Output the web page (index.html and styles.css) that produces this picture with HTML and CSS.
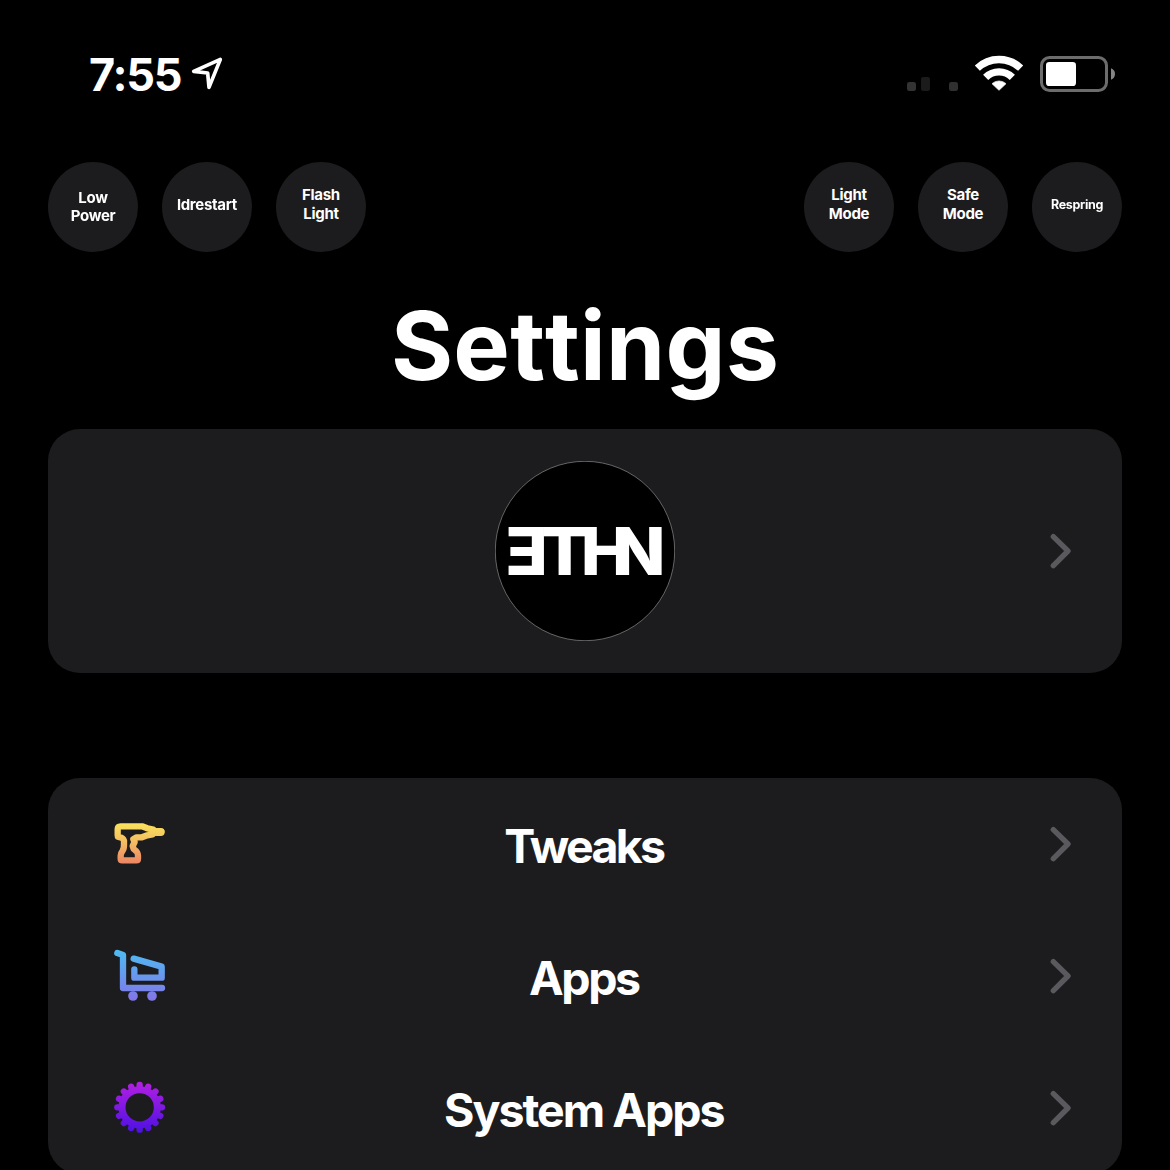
FILE: index.html
```html
<!DOCTYPE html>
<html lang="en">
<head>
<meta charset="utf-8">
<title>Settings</title>
<link rel="stylesheet" href="styles.css">
</head>
<body>
<header class="status">
  <div class="status-left">
    <span class="clock">7:55</span>
    <svg class="location" viewBox="330 33 102 105" width="34" height="35"><path d="M421 43L341 79L383 84L387 127Z" fill="none" stroke="#fff" stroke-width="11" stroke-linejoin="round"/></svg>
  </div>
  <svg class="indicators" viewBox="0 0 720 180" width="240" height="60">
    <rect x="51" y="111" width="27" height="27" rx="7" fill="#333"/>
    <rect x="93" y="96" width="27" height="42" rx="7" fill="#1b1b1b"/>
    <rect x="177" y="111" width="27" height="27" rx="7" fill="#303030"/>
    <g fill="none" stroke="#fff" stroke-width="22">
      <path d="M262 69.500A94 94 0 0 1 392 69.500"/>
      <path d="M287 97A57 57 0 0 1 367 97"/>
    </g>
    <path d="M327 136L306 116A31 31 0 0 1 348 116Z" fill="#fff" stroke="#fff" stroke-width="2" stroke-linejoin="round"/>
    <rect x="454.500" y="37.500" width="195" height="99" rx="24" fill="none" stroke="#6c6c6c" stroke-width="9"/>
    <rect x="468" y="51" width="90" height="72" rx="10" fill="#fff"/>
    <path d="M663 70Q675 75 675 87T663 104Z" fill="#858585"/>
  </svg>
</header>

<nav class="shortcuts">
  <div class="group">
    <button class="round low"><span class="soft">Low<br>Power</span></button>
    <button class="round ldrestart"><span class="soft">ldrestart</span></button>
    <button class="round">Flash<br>Light</button>
  </div>
  <div class="group">
    <button class="round">Light<br>Mode</button>
    <button class="round">Safe<br>Mode</button>
    <button class="round respring"><span class="soft">Respring</span></button>
  </div>
</nav>

<h1 class="title">Settings</h1>

<main class="content">
  <section class="card profile">
    <svg class="avatar" viewBox="0 0 180 180" width="180" height="180" role="img" aria-label="ETHN">
      <circle cx="90" cy="90" r="89.700" fill="#000" stroke="#a0a0a0" stroke-width=".6"/>
      <text class="mark" transform="scale(1.06 1)" x="9.600 43.400 80.900 110.400" y="114">ƎTHN</text>
    </svg>
    <svg class="chevron" viewBox="60 39 66 108" width="22" height="36"><path d="M70 50L114 93L70 137"/></svg>
  </section>

  <section class="card list">
    <div class="row">
      <svg class="icon drill" viewBox="0 0 240 210" width="80" height="70">
        <defs><linearGradient id="drill" gradientUnits="userSpaceOnUse" x1="0" y1="40" x2="0" y2="162"><stop offset="0" stop-color="#fae25c"/><stop offset=".45" stop-color="#f3bd62"/><stop offset="1" stop-color="#ee8464"/></linearGradient></defs>
        <path stroke="url(#drill)" stroke-width="19" d="M62 49H126L142 55L160 59L163 65H184L182 67H162L158 73L142 76L126 82H110L100 88L104 96L98 108L101 117Q114 126 114 137V146Q114 151 109 151H67Q62 151 62 146V137Q62 130 67 124Q73 115 72 102V92Q69 83 60 82Q53 82 53 76V58Q53 49 62 49Z"/>
        <path stroke="url(#drill)" stroke-width="24" d="M164 66H182"/>
      </svg>
      <span class="label tweaks">Tweaks</span>
      <svg class="chevron" viewBox="60 39 66 108" width="22" height="36"><path d="M70 50L114 93L70 137"/></svg>
    </div>
    <div class="row">
      <svg class="icon cart" viewBox="0 0 240 240" width="80" height="80">
        <defs><linearGradient id="cart" gradientUnits="userSpaceOnUse" x1="0" y1="45" x2="0" y2="198"><stop offset="0" stop-color="#4dbcf3"/><stop offset="1" stop-color="#8374e8"/></linearGradient></defs>
        <path stroke="url(#cart)" stroke-width="19" d="M52 54L69 60V159H186M101 71L185 95V128H103V103"/>
        <g fill="url(#cart)"><circle cx="99" cy="183" r="14.500"/><circle cx="156" cy="183" r="14.500"/></g>
      </svg>
      <span class="label">Apps</span>
      <svg class="chevron" viewBox="60 39 66 108" width="22" height="36"><path d="M70 50L114 93L70 137"/></svg>
    </div>
    <div class="row">
      <svg class="icon gear" viewBox="0 0 240 240" width="80" height="80">
        <defs><linearGradient id="gear" gradientUnits="userSpaceOnUse" x1="0" y1="-76" x2="0" y2="76"><stop offset="0" stop-color="#b41fe4"/><stop offset="1" stop-color="#4b11e2"/></linearGradient></defs>
        <g transform="translate(119 112)" stroke="url(#gear)">
          <circle r="53" stroke-width="21"/>
          <path stroke-width="19" d="M-.01-55L.01-67M21-50.800L25.600-61.900M38.900-38.900L47.400-47.400M50.800-21L61.900-25.600M55 0H67M50.800 21L61.900 25.600M38.900 38.900L47.400 47.400M21 50.800L25.600 61.900M0 55V67M-21 50.800L-25.600 61.900M-38.900 38.900L-47.400 47.400M-50.800 21L-61.900 25.600M-55 0H-67M-50.800-21L-61.900-25.600M-38.900-38.900L-47.400-47.400M-21-50.800L-25.600-61.900"/>
        </g>
      </svg>
      <span class="label system">System Apps</span>
      <svg class="chevron" viewBox="60 39 66 108" width="22" height="36"><path d="M70 50L114 93L70 137"/></svg>
    </div>
  </section>
</main>
</body>
</html>
```
FILE: styles.css
```css
* { box-sizing: border-box; }

html, body { margin: 0; height: 1170px; overflow: hidden; background: #000; }

body {
  color: #fff;
  font-family: Inter, "Liberation Sans", sans-serif;
}

svg { display: block; flex: none; }

.status {
  height: 162px;
  padding: 45px 40px 0 89px;
  display: flex;
  justify-content: space-between;
  align-items: flex-start;
}

.status-left { display: flex; gap: 9px; }

.clock {
  width: 92px;
  font-size: 45px;
  font-weight: 650;
  line-height: 60px;
  letter-spacing: -1.200px;
  white-space: nowrap;
}

.location { margin-top: 11px; }

.shortcuts {
  height: 90px;
  padding: 0 48px;
  display: flex;
  justify-content: space-between;
}

.group { display: flex; gap: 24px; }

.round {
  width: 90px;
  height: 90px;
  padding: 0 0 6px;
  border: 0;
  border-radius: 50%;
  background: #1c1c1e;
  color: #fff;
  font: 700 15px/19px Inter, "Liberation Sans", sans-serif;
  letter-spacing: -.3px;
  text-align: center;
}

.soft { display: block; filter: blur(.7px); }
.low { line-height: 18px; padding-bottom: 0; }
.ldrestart { padding-bottom: 6px; }
.respring { font-size: 12.500px; padding-bottom: 5px; }

.title {
  height: 177px;
  margin: 0;
  padding-top: 36px;
  font-size: 95px;
  font-weight: 700;
  font-kerning: none;
  line-height: 116px;
  letter-spacing: .2px;
  text-align: center;
}

.content {
  padding: 0 48px;
  display: flex;
  flex-direction: column;
  gap: 105px;
}

.card { border-radius: 32px; background: #1c1c1e; }

.profile {
  height: 244px;
  padding: 0 50px;
  display: grid;
  grid-template-columns: 1fr 180px 1fr;
  align-items: center;
}

.avatar { grid-column: 2; }
.profile .chevron { justify-self: end; }

.mark { fill: #fff; font: 800 66px Inter, "Liberation Sans", sans-serif; }

.chevron path {
  fill: none;
  stroke: #5a5a5e;
  stroke-width: 16px;
  stroke-linecap: round;
  stroke-linejoin: round;
}

.row {
  height: 132px;
  padding: 0 50px 0 52px;
  display: grid;
  grid-template-columns: 80px 1fr 82px;
  align-items: center;
}

.row .chevron { justify-self: end; }

.icon { fill: none; stroke-linecap: round; stroke-linejoin: round; }
.icon g[fill] { stroke: none; }
.drill { margin-top: 2px; }
.cart { margin-bottom: 2px; }
.gear { margin-top: 4px; }

.label {
  padding-top: 4px;
  font-size: 46.500px;
  font-weight: 700;
  line-height: 56px;
  text-align: center;
  letter-spacing: -2.400px;
  text-indent: -2.400px;
}

.tweaks { letter-spacing: -2.700px; }
.system { letter-spacing: -2px; }
```
